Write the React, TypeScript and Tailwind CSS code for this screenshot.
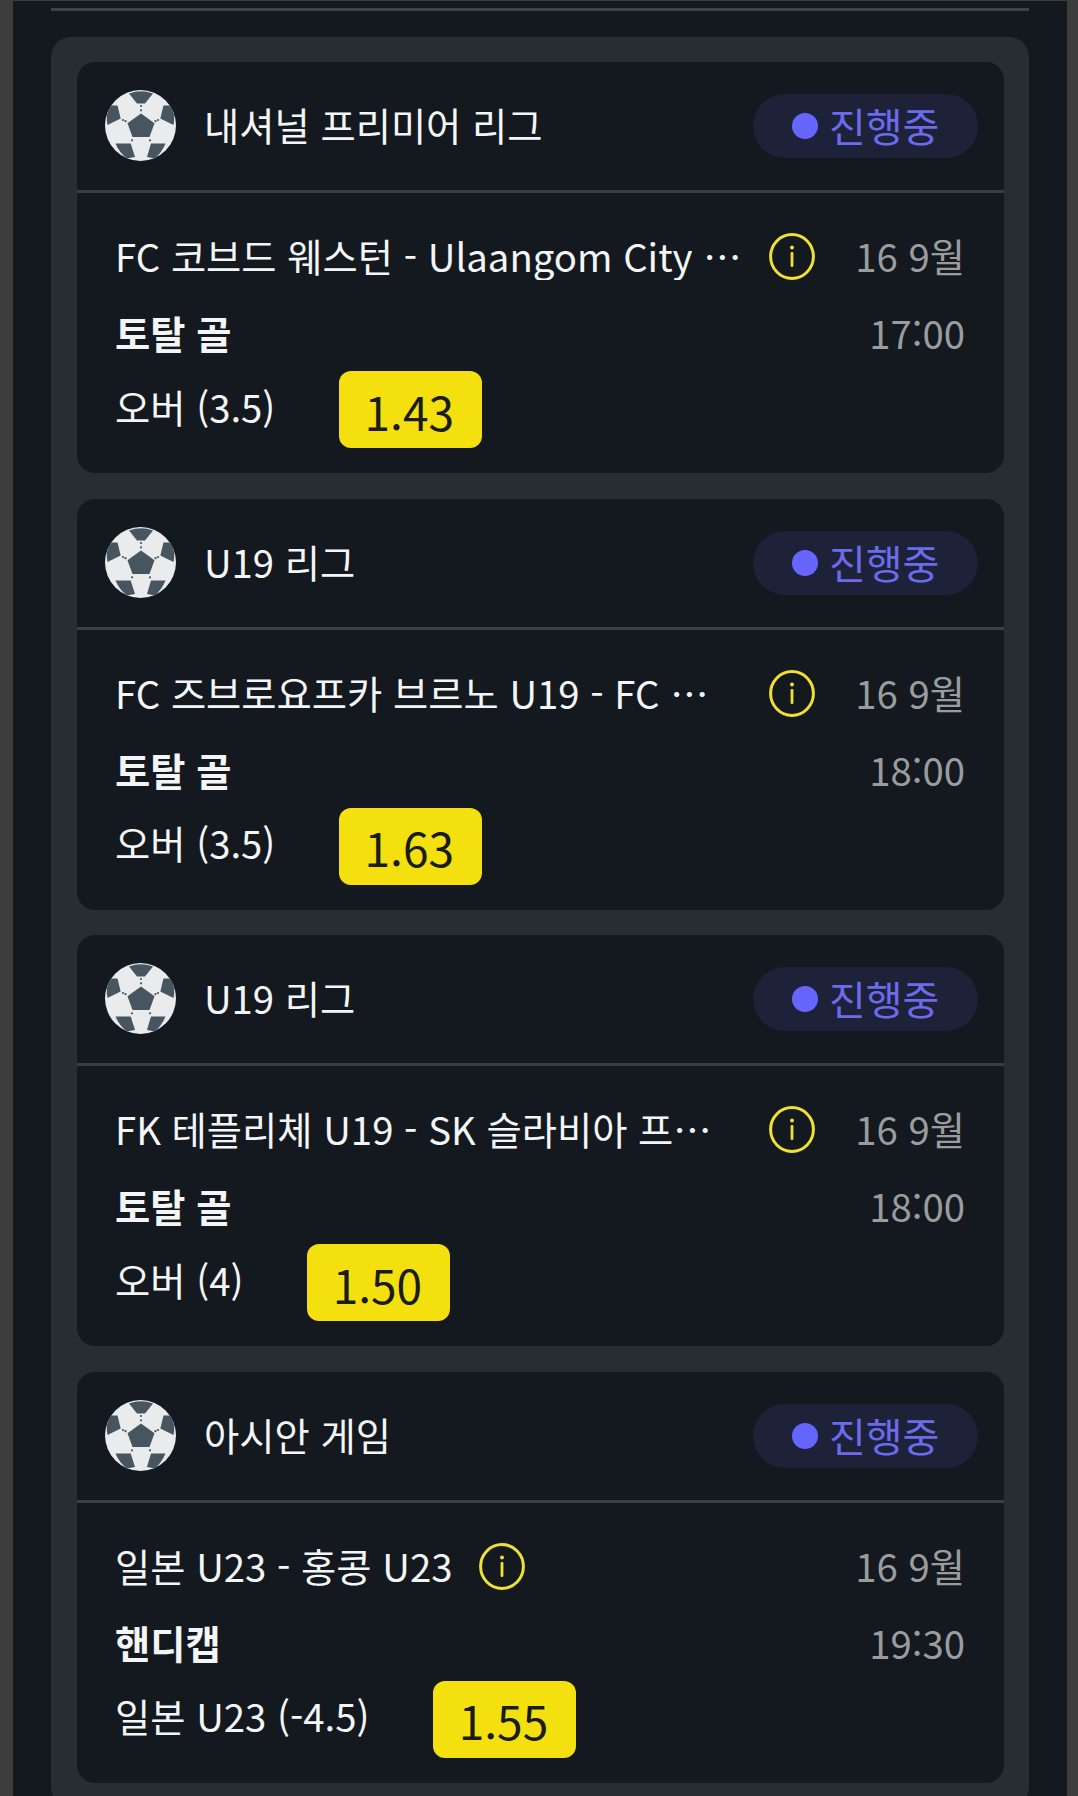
const FONT = "font-['Noto_Sans_CJK_KR','Noto_Sans',sans-serif]";

function Ball() {
  return (
    <svg width="71" height="71" viewBox="0 0 71 71" className="mb-[1px] shrink-0">
      <circle cx="35.5" cy="35.5" r="35.5" fill="#e9ebec" />
      <g fill="#46555f">
        <path d="M36 23.5 L49.5 33.3 L44.5 47 L27.5 47 L22.5 33.3 Z" />
        <path d="M24 3.5 Q36 -1 48 3.5 L40 13.5 L32 13.5 Z" />
        <path d="M6 15.5 L12.5 15.5 L15.7 28.5 L2.5 35 Q0 24 6 15.5 Z" />
        <path d="M65 15.5 L58.5 15.5 L55.3 28.5 L68.5 35 Q71 24 65 15.5 Z" />
        <path d="M10.5 53.5 L25.7 53.5 L30 67 L21.7 68.5 Q14 62 10.5 53.5 Z" />
        <path d="M60.5 53.5 L46 53.5 L42 67 L50 68.5 Q57 62 60.5 53.5 Z" />
        <circle cx="36" cy="16" r="1.1" />
        <circle cx="36" cy="20.3" r="1.1" />
        <circle cx="18" cy="30" r="1.1" />
        <circle cx="20.5" cy="31.2" r="1.1" />
        <circle cx="53" cy="30" r="1.1" />
        <circle cx="50.5" cy="31.2" r="1.1" />
        <circle cx="27" cy="50.3" r="1.1" />
        <circle cx="45" cy="50.3" r="1.1" />
      </g>
    </svg>
  );
}

function Info() {
  return (
    <svg width="46" height="47" viewBox="0 0 46 47" className="shrink-0" fill="none">
      <ellipse cx="23" cy="23.5" rx="21.4" ry="21.9" stroke="#f0e132" strokeWidth="3" />
      <circle cx="23" cy="14.5" r="2" fill="#f0e132" />
      <rect x="21.6" y="19" width="2.8" height="15" rx="1.2" fill="#f0e132" />
    </svg>
  );
}

type Item = { league: string; title: string; market: string; pick: string; odds: string; time: string };

const items: Item[] = [
  { league: "내셔널 프리미어 리그", title: "FC 코브드 웨스턴 - Ulaangom City FC 코브드", market: "토탈 골", pick: "오버 (3.5)", odds: "1.43", time: "17:00" },
  { league: "U19 리그", title: "FC 즈브로요프카 브르노 U19 - FC 슬로바츠코 U19", market: "토탈 골", pick: "오버 (3.5)", odds: "1.63", time: "18:00" },
  { league: "U19 리그", title: "FK 테플리체 U19 - SK 슬라비아 프라하 U19", market: "토탈 골", pick: "오버 (4)", odds: "1.50", time: "18:00" },
  { league: "아시안 게임", title: "일본 U23 - 홍콩 U23", market: "핸디캡", pick: "일본 U23 (-4.5)", odds: "1.55", time: "19:30" },
];

function Card({ item }: { item: Item }) {
  return (
    <div className="rounded-[18px] bg-[#13191f]">
      <div className="flex h-[128px] items-center justify-between pl-[28px] pr-[26px]">
        <div className="flex items-center gap-[28px]">
          <Ball />
          <span className="pb-[2px] text-[38.3px] leading-[48px] text-[#f4f5f6]">{item.league}</span>
        </div>
        <div className="flex h-[64px] w-[225px] items-center gap-[11px] rounded-full bg-[#1d2238] pl-[39px]">
          <span className="h-[26px] w-[26px] rounded-full bg-[#6666ff]" />
          <span className="pb-[2px] text-[40px] leading-[48px] text-[#6b6bec]">진행중</span>
        </div>
      </div>
      <div className="h-[3px] bg-[#3a3f42]" />
      <div className="flex h-[280px] justify-between pl-[38px] pr-[39px] pt-[40px]">
        <div className="flex min-w-0 flex-col">
          <div className="flex h-[47px] items-center gap-[27px]">
            <span className="max-w-[627px] truncate pb-[2px] text-[38.3px] leading-[45px] text-[#f4f5f6]">{item.title}</span>
            <Info />
          </div>
          <div className="mt-[29px] text-[38.3px] font-bold leading-[48px] text-[#f4f5f6]">{item.market}</div>
          <div className="mt-[14px] flex items-center gap-[64px]">
            <span className="pb-[6px] text-[38.3px] leading-[48px] text-[#f4f5f6]">{item.pick}</span>
            <span className="flex h-[77px] w-[143px] items-center justify-center rounded-[12px] bg-[#f4e00f] pr-[3px] pt-[3px] text-[46px] text-[#1a1c16]">
              {item.odds}
            </span>
          </div>
        </div>
        <div className="flex shrink-0 flex-col items-end text-[38.3px] text-[#9a9c9e]">
          <span className="h-[47px] pb-[2px] leading-[45px]">16 9월</span>
          <span className="mt-[29px] leading-[48px]">{item.time}</span>
        </div>
      </div>
    </div>
  );
}

export default function App() {
  return (
    <div lang="ko" className={`h-[1796px] w-[1078px] overflow-hidden bg-[#3d3d3d] pt-[1px] ${FONT}`}>
      <div className="ml-[13px] mr-[11px] h-full bg-[#13191f] px-[38px] pt-[7px]">
        <div className="h-[3px] bg-[#3f4346]" />
        <div className="mt-[26px] rounded-[20px] bg-[#282d31] pb-[24px] pl-[26px] pr-[25px] pt-[25px]">
          <div className="flex flex-col gap-[25.6px]">
            {items.map((item, i) => (
              <Card key={i} item={item} />
            ))}
          </div>
        </div>
      </div>
    </div>
  );
}
